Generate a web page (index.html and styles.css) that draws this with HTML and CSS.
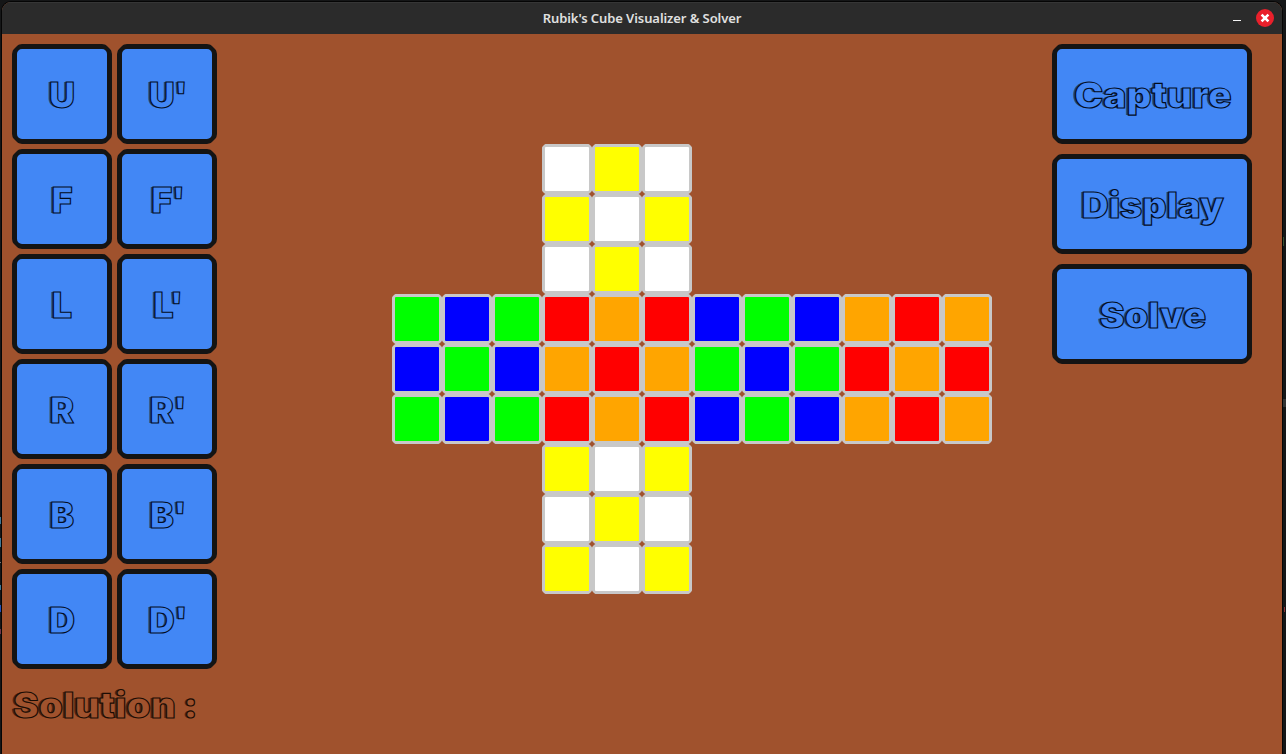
FILE: index.html
```html
<!DOCTYPE html>
<html lang="en">
<head>
<meta charset="utf-8">
<title>Rubik's Cube Visualizer &amp; Solver</title>
<link rel="stylesheet" href="styles.css">
</head>
<body>
<div class="window">
  <header class="titlebar">
    <h1 class="title">Rubik's Cube Visualizer &amp; Solver</h1>
    <div class="controls">
      <svg class="minimize" width="8" height="2" viewBox="0 0 8 2"><rect width="8" height="1" fill="#f4f4f4"/></svg>
      <svg class="close" width="18" height="18" viewBox="0 0 18 18"><circle cx="9" cy="9" r="9" fill="#e9202b"/><path d="M5.6 5.6l6.8 6.8M12.4 5.6l-6.8 6.8" stroke="#fff" stroke-width="2.6"/></svg>
    </div>
  </header>
  <main class="app">
    <section class="left">
      <div class="moves">
        <button class="btn"><span class="label">U</span></button><button class="btn"><span class="label prime">U'</span></button>
        <button class="btn"><span class="label">F</span></button><button class="btn"><span class="label prime">F'</span></button>
        <button class="btn"><span class="label">L</span></button><button class="btn"><span class="label prime">L'</span></button>
        <button class="btn"><span class="label">R</span></button><button class="btn"><span class="label prime">R'</span></button>
        <button class="btn"><span class="label">B</span></button><button class="btn"><span class="label prime">B'</span></button>
        <button class="btn"><span class="label">D</span></button><button class="btn"><span class="label prime">D'</span></button>
      </div>
      <p class="solution"><span class="label">Solution<span class="colon">:</span></span></p>
    </section>
    <section class="net" id="net"></section>
    <section class="actions">
      <button class="btn"><span class="label capture">Capture</span></button>
      <button class="btn"><span class="label word">Display</span></button>
      <button class="btn"><span class="label word">Solve</span></button>
    </section>
  </main>
</div>
<script src="net.js"></script>
</body>
</html>
```
FILE: net.js
```js
const rows = [
  "...wyw......",
  "...ywy......",
  "...wyw......",
  "gbgrorbgboro",
  "bgborogbgror",
  "gbgrorbgboro",
  "...ywy......",
  "...wyw......",
  "...ywy......"
];
const net = document.getElementById("net");
for (const row of rows) {
  for (const code of row) {
    const cell = document.createElement("div");
    cell.className = code === "." ? "gap" : "sticker " + code;
    net.appendChild(cell);
  }
}
```
FILE: styles.css
```css
* { box-sizing: border-box; }
body {
  margin: 0;
  padding: 2px 4px 0 2px;
  height: 754px;
  overflow: hidden;
  background:
    linear-gradient(#3f7896, #3f7896) 0 517px / 1px 7px no-repeat,
    linear-gradient(#3f7896, #3f7896) 0 538px / 1px 9px no-repeat,
    linear-gradient(#777, #777) 0 562px / 1px 1px no-repeat,
    linear-gradient(#3f7896, #3f7896) 0 585px / 1px 5px no-repeat,
    linear-gradient(#2450b8, #2450b8) 0 605px / 1px 7px no-repeat,
    linear-gradient(#70364a, #70364a) 0 629px / 1px 5px no-repeat,
    linear-gradient(#38502f, #38502f) 1283px 237px / 1px 9px no-repeat,
    linear-gradient(#333, #333) 1283px 399px / 3px 8px no-repeat,
    linear-gradient(#8d3139, #8d3139) 1284px 607px / 1px 5px no-repeat,
    #151617;
}
.window {
  width: 1280px;
  height: 752px;
  border-radius: 9px 9px 0 0;
  overflow: hidden;
  background: #a0522d;
  box-shadow: 0 0 0 1px #050505;
}
.titlebar {
  display: grid;
  grid-template-columns: 1fr auto 1fr;
  align-items: center;
  height: 32px;
  background: #2b2b2b;
  box-shadow: inset 0 1px #363636;
}
.title {
  grid-column: 2;
  margin: 0;
  font: 600 13px/32px "Noto Sans", sans-serif;
  letter-spacing: -0.08px;
  color: #e0e0e0;
}
.controls {
  display: flex;
  justify-content: flex-end;
  align-items: center;
  gap: 15px;
  padding-right: 8px;
}
.minimize { margin-top: 5px; }
.app {
  display: flex;
  height: 720px;
  padding: 10px 30px 0 10px;
  background: #a0522d;
}
.left { width: 205px; }
.moves {
  display: grid;
  grid-template-columns: 100px 100px;
  grid-auto-rows: 100px;
  gap: 5px;
}
.btn {
  display: flex;
  justify-content: center;
  align-items: center;
  margin: 0;
  padding: 0;
  border: 5px solid #141414;
  border-radius: 10px;
  background: #4287f5;
  color: #4287f5;
  clip-path: polygon(7px 0, calc(100% - 7px) 0, 100% 7px, 100% calc(100% - 7px), calc(100% - 7px) 100%, 7px 100%, 0 calc(100% - 7px), 0 7px);
}
.label {
  display: inline-block;
  font: 900 36px/44px Inter, sans-serif;
  white-space: nowrap;
  transform: translateY(1px);
  -webkit-text-stroke: 1.1px #030c1c;
  text-shadow: -2px 0 0 rgba(3, 12, 28, 0.6);
}
.capture { transform: translate(1px, 1px) scaleX(1.08); }
.word { transform: translate(1px, 1px) scaleX(1.05); }
.prime { letter-spacing: -0.5px; transform: translate(1px, 1px); }
.solution {
  margin: 14px 0 0 1px;
  color: #a0522d;
}
.solution .label {
  transform: scaleX(1.075);
  transform-origin: left;
  -webkit-text-stroke-color: #1a0c04;
  text-shadow: -2px 0 0 rgba(20, 9, 3, 0.6);
}
.colon { margin-left: 7px; }
.net {
  display: grid;
  grid-template-columns: repeat(12, 50px);
  grid-auto-rows: 50px;
  margin: 100px 0 0 175px;
}
.sticker {
  border: 3px solid #c8c8c8;
  border-radius: 4px;
  clip-path: polygon(3px 0, 47px 0, 50px 3px, 50px 47px, 47px 50px, 3px 50px, 0 47px, 0 3px);
}
.w { background: #fff; }
.y { background: #ff0; }
.g { background: #0f0; }
.b { background: #00f; }
.r { background: #f00; }
.o { background: #ffa500; }
.actions {
  display: grid;
  grid-template-columns: 200px;
  grid-auto-rows: 100px;
  gap: 10px;
  margin-left: auto;
}
```
